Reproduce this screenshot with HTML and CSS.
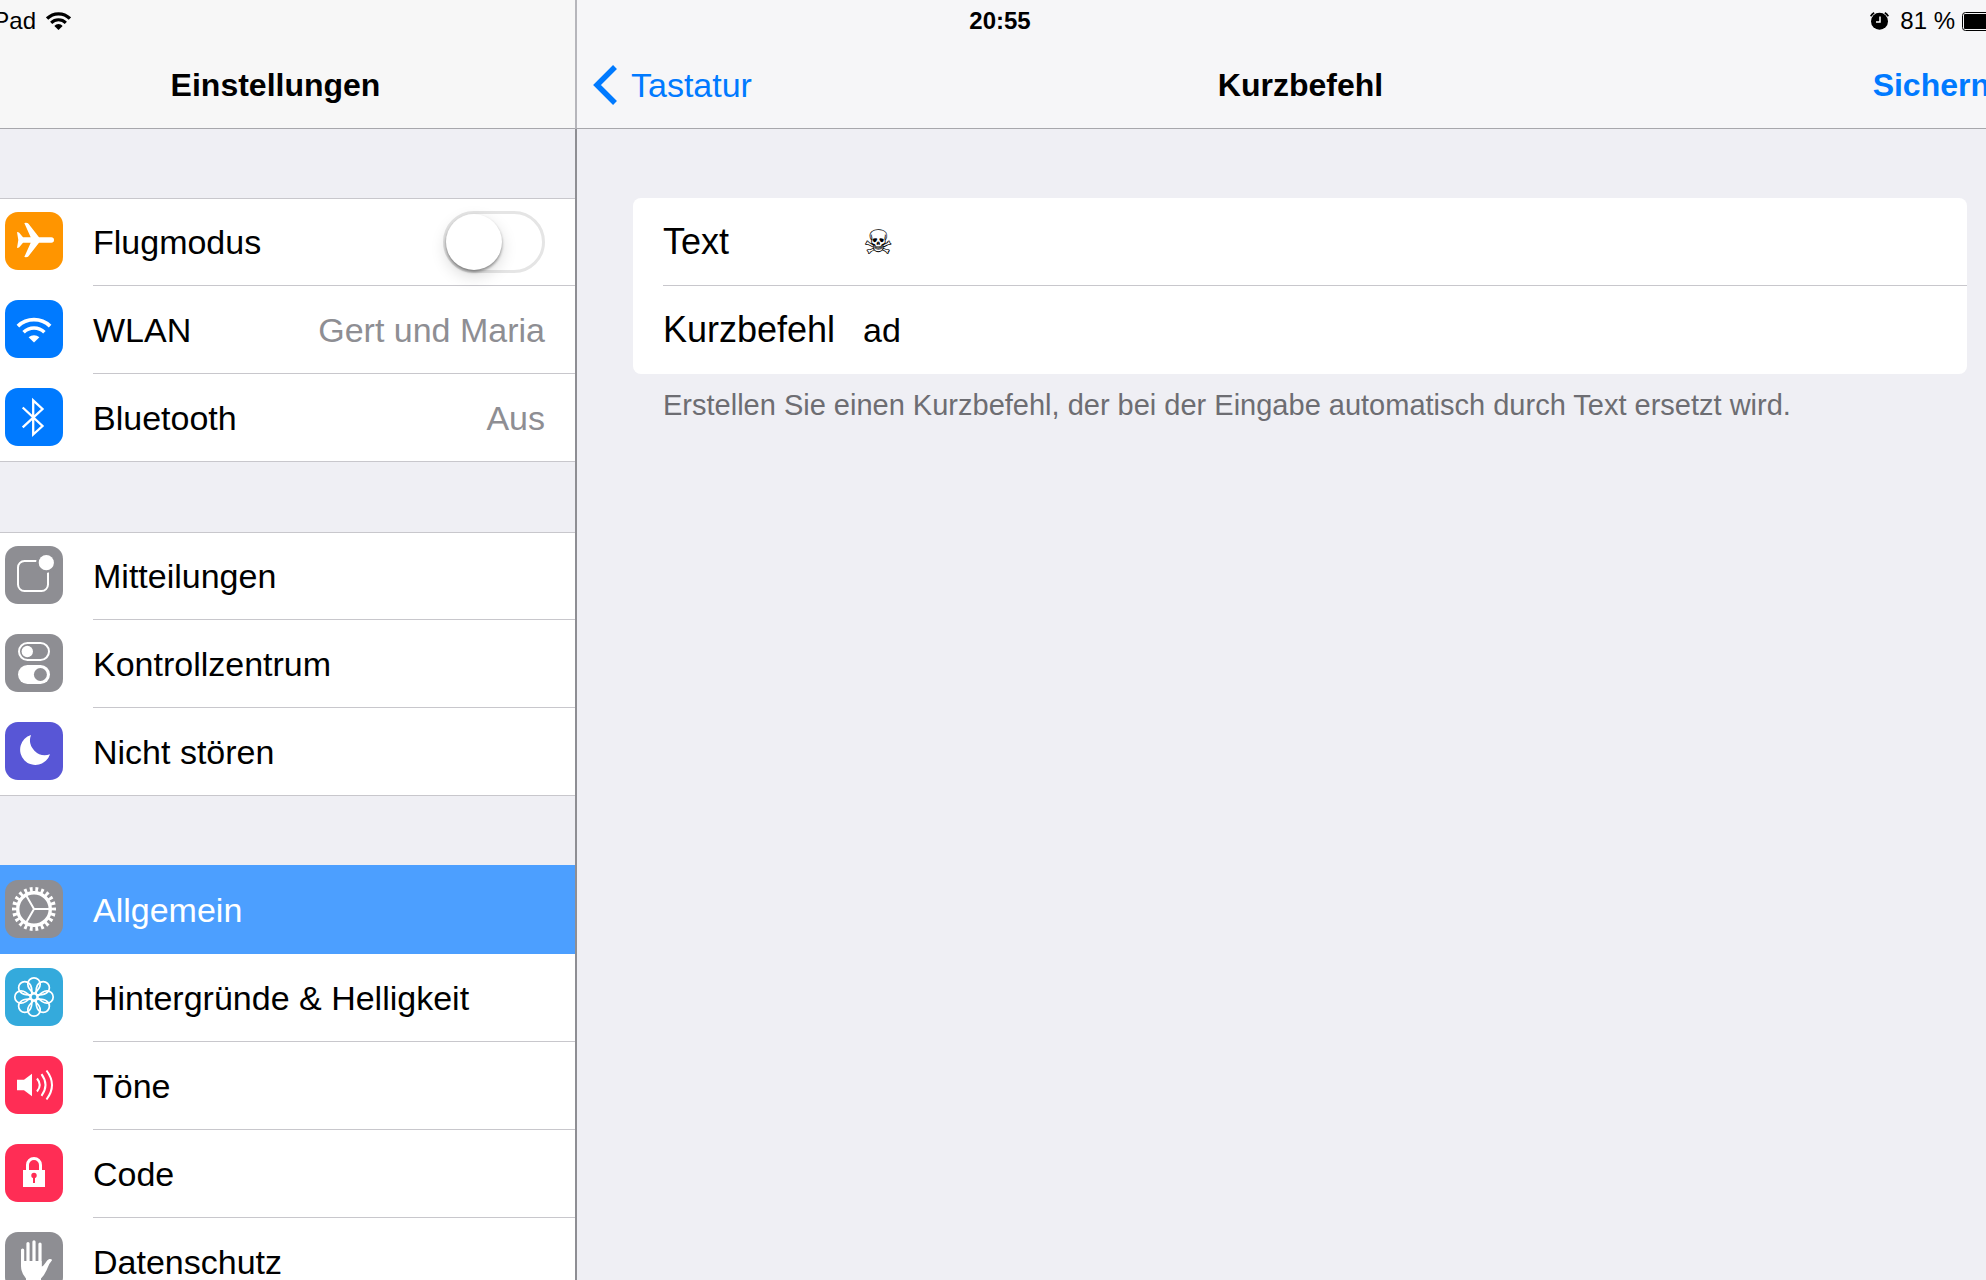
FILE: index.html
```html
<!DOCTYPE html>
<html lang="de">
<head>
    <meta charset="UTF-8">
    <meta name="viewport" content="width=device-width, initial-scale=1.0">
    <title>Einstellungen</title>
    <link rel="stylesheet" href="styles.css">
</head>
<body>
    <div class="screen">
        <div class="status-bar">
            <div class="status-left">
                <span>iPad</span>
                <svg class="status-wifi" viewBox="11 17 36 26" fill="none" stroke="#000">
                    <path stroke-width="4.8" d="M12.5 26.5a23.2 23.2 0 0 1 33 0"/>
                    <path stroke-width="4.4" d="M18.4 32.6a15 15 0 0 1 21.2 0"/>
                    <path fill="#000" stroke="none" d="M29 43l-6-5.800a8 8 0 0 1 12 0z"/>
                </svg>
            </div>
            <time class="status-time">20:55</time>
            <div class="status-right">
                <svg class="status-alarm" viewBox="0 0 19 18">
                    <circle cx="9.5" cy="9.3" r="8.5"/>
                    <path d="M0.6 4.2A12 12 0 0 1 4.2 0.8M18.4 4.2A12 12 0 0 0 14.8 0.8" fill="none" stroke="#000" stroke-width="1.6"/>
                    <path d="M10 4.5V10H6" fill="none" stroke="#fff" stroke-width="1.5"/>
                </svg>
                <span>81 %</span>
                <svg class="status-battery" viewBox="0 0 50 19">
                    <rect x="0.5" y="0.5" width="45" height="18" rx="3" fill="none" stroke="#000"/>
                    <rect x="2" y="2" width="36" height="15" rx="1"/>
                    <path d="M47 6q3 3.500 0 7z"/>
                </svg>
            </div>
        </div>

        <aside class="sidebar">
            <header class="nav-bar">
                <h1 class="nav-title">Einstellungen</h1>
            </header>

            <nav class="menu">
                <div class="group">
                    <div class="row">
                        <svg class="icon icon-orange" viewBox="0 0 58 58">
                            <path fill="#fff" d="M46.300 25.300a2.700 2.700 0 0 1 0 5.400H34L23.500 44.200q-1 1.300-4.200.8L25.700 30.700H18L14 35.500 12 36l1.300-8L12 20l2 .5 4 4.800h7.700L19.300 11q3.200-.5 4.200.8L34 25.300z"/>
                        </svg>
                        <div class="row-body">
                            <label for="flight">Flugmodus</label>
                            <input class="switch" type="checkbox" id="flight">
                        </div>
                    </div>
                    <a class="row" href="#wlan">
                        <svg class="icon icon-blue" viewBox="0 0 58 58" fill="none" stroke="#fff">
                            <path stroke-width="3.800" d="M12.900 26.200a23.200 23.200 0 0 1 32.200 0"/>
                            <path stroke-width="3.600" d="M18.600 32.200a15 15 0 0 1 20.800 0"/>
                            <path fill="#fff" stroke="none" d="M29 42.500l-5.400-5.200a8 8 0 0 1 10.800 0z"/>
                        </svg>
                        <div class="row-body">
                            <span>WLAN</span>
                            <span class="row-value">Gert und Maria</span>
                        </div>
                    </a>
                    <a class="row" href="#bluetooth">
                        <svg class="icon icon-blue" viewBox="0 0 58 58">
                            <path fill="none" stroke="#fff" stroke-width="2.300" d="M17.700 19.500L37.500 38 28.200 46.500V12.300L37.500 21 17.700 39.300"/>
                        </svg>
                        <div class="row-body">
                            <span>Bluetooth</span>
                            <span class="row-value">Aus</span>
                        </div>
                    </a>
                </div>

                <div class="group">
                    <a class="row" href="#mitteilungen">
                        <svg class="icon icon-gray" viewBox="0 0 58 58">
                            <rect x="13" y="15" width="30" height="30" rx="6.500" fill="none" stroke="#fff" stroke-width="2"/>
                            <circle cx="41.300" cy="16.700" r="10.300" fill="#8e8e93"/>
                            <circle cx="41.300" cy="16.700" r="7.600" fill="#fff"/>
                        </svg>
                        <div class="row-body"><span>Mitteilungen</span></div>
                    </a>
                    <a class="row" href="#kontrollzentrum">
                        <svg class="icon icon-gray" viewBox="0 0 58 58">
                            <rect x="14" y="9" width="30" height="17" rx="8.500" fill="none" stroke="#fff" stroke-width="2"/>
                            <circle cx="22.300" cy="17.500" r="5.700" fill="#fff"/>
                            <rect x="13" y="31" width="32" height="19" rx="9.500" fill="#fff"/>
                            <circle cx="35.400" cy="40.500" r="6.500" fill="#8e8e93"/>
                        </svg>
                        <div class="row-body"><span>Kontrollzentrum</span></div>
                    </a>
                    <a class="row" href="#nicht-stoeren">
                        <svg class="icon icon-purple" viewBox="0 0 58 58">
                            <path fill="#fff" d="M26 13A15.300 15.300 0 1 0 45 32.300 15 15 0 0 1 26 13z"/>
                        </svg>
                        <div class="row-body"><span>Nicht stören</span></div>
                    </a>
                </div>

                <div class="group">
                    <a class="row active" href="#allgemein">
                        <svg class="icon icon-gray" viewBox="0 0 58 58" fill="none" stroke="#fff">
                            <circle cx="29" cy="29" r="16.300" stroke-width="3.400"/>
                            <circle cx="29" cy="29" r="19.600" stroke-width="4.800" pathLength="44" stroke-dasharray="1 1" stroke-dashoffset="0.500"/>
                            <path stroke-width="2" d="M29 29H44M29 29L21.500 16M29 29L21.500 42"/>
                        </svg>
                        <div class="row-body"><span>Allgemein</span></div>
                    </a>
                    <a class="row" href="#hintergruende">
                        <svg class="icon icon-cyan" viewBox="0 0 58 58" fill="none" stroke="#fff" stroke-width="1.700">
                            <defs>
                                <path id="petal" d="M29 25.700C25 22.500 22.800 19 22.800 16a6.200 6.200 0 0 1 12.400 0C35.200 19 33 22.500 29 25.700z"/>
                            </defs>
                            <use href="#petal"/>
                            <use href="#petal" transform="rotate(45 29 29)"/>
                            <use href="#petal" transform="rotate(90 29 29)"/>
                            <use href="#petal" transform="rotate(135 29 29)"/>
                            <use href="#petal" transform="rotate(180 29 29)"/>
                            <use href="#petal" transform="rotate(225 29 29)"/>
                            <use href="#petal" transform="rotate(270 29 29)"/>
                            <use href="#petal" transform="rotate(315 29 29)"/>
                            <circle cx="29" cy="29" r="3.300"/>
                        </svg>
                        <div class="row-body"><span>Hintergründe &amp; Helligkeit</span></div>
                    </a>
                    <a class="row" href="#toene">
                        <svg class="icon icon-red" viewBox="0 0 58 58">
                            <path fill="#fff" d="M12 23.700H19L27 17.700V40.300L19 34.300H12z"/>
                            <path fill="none" stroke="#fff" stroke-width="2" d="M32 22.500Q37.500 29 32 35.500M36.500 18.200Q44.500 29 36.500 39.800M41.500 14.500Q52.500 29 41.500 43.500"/>
                        </svg>
                        <div class="row-body"><span>Töne</span></div>
                    </a>
                    <a class="row" href="#code">
                        <svg class="icon icon-red" viewBox="0 0 58 58">
                            <path fill="none" stroke="#fff" stroke-width="3" d="M22.500 27V21a6.500 6.500 0 0 1 13 0V27"/>
                            <rect x="18" y="26" width="22" height="17" fill="#fff"/>
                            <circle cx="29" cy="31.500" r="2.700" fill="#ff2d55"/>
                            <path stroke="#ff2d55" stroke-width="2" d="M29 31V39"/>
                        </svg>
                        <div class="row-body"><span>Code</span></div>
                    </a>
                    <a class="row" href="#datenschutz">
                        <svg class="icon icon-gray" viewBox="0 0 58 58">
                            <path fill="none" stroke="#fff" stroke-width="3.200" stroke-linecap="round" d="M17.600 18V33M23 11.500V32M29 9.800V32M35 12V34"/>
                            <path fill="#fff" d="M16 29H36.600V34.500Q38.500 34 40 31.500 42.500 27.300 44.500 27 47 26.800 47 28.300 44.500 31 42.500 36 39.500 43.500 36 46.500V50H21V46.500Q16 41 16 34z"/>
                        </svg>
                        <div class="row-body"><span>Datenschutz</span></div>
                    </a>
                </div>
            </nav>
        </aside>

        <main class="detail">
            <header class="nav-bar nav-bar-detail">
                <a class="back" href="#tastatur">
                    <svg class="chevron" viewBox="0 0 24 40">
                        <path fill="none" stroke="#007aff" stroke-width="5.500" d="M22 2L4 20 22 38"/>
                    </svg>
                    Tastatur
                </a>
                <h2 class="nav-title">Kurzbefehl</h2>
                <button class="save" type="submit" form="shortcut">Sichern</button>
            </header>

            <form class="form" id="shortcut">
                <div class="fields">
                    <div class="field">
                        <label for="text">Text</label>
                        <input type="text" id="text" value="☠">
                    </div>
                    <div class="field">
                        <label for="short">Kurzbefehl</label>
                        <input type="text" id="short" value="ad">
                    </div>
                </div>
                <p class="hint">Erstellen Sie einen Kurzbefehl, der bei der Eingabe automatisch durch Text ersetzt wird.</p>
            </form>
        </main>
    </div>
</body>
</html>
```
FILE: styles.css
```css
* {
    margin: 0;
    padding: 0;
    box-sizing: border-box;
}

body {
    background: #efeff4;
    color: #000;
    font-family: "Liberation Sans", Arial, "DejaVu Sans", sans-serif;
    font-size: 34px;
    overflow: hidden;
}

a {
    color: inherit;
    text-decoration: none;
}

/* the screen runs past both window edges */
.screen {
    display: grid;
    grid-template-columns: 599px 1fr;
    grid-template-rows: 42px 1fr;
    height: 100vh;
    margin: 0 -38px 0 -24px;
}

/* Status bar */
.status-bar {
    grid-area: 1 / 1 / 2 / 3;
    z-index: 1;
    display: grid;
    grid-template-columns: 1fr auto 1fr;
    align-items: center;
    padding: 0 12px;
    font-size: 24px;
}

.status-left,
.status-right {
    display: flex;
    align-items: center;
    gap: 10px;
}

.status-right {
    justify-content: flex-end;
    gap: 7px;
}

.status-time {
    font-weight: bold;
}

.status-wifi {
    width: 25px;
    height: 18px;
}

.status-alarm {
    width: 19px;
    height: 18px;
    margin-right: 4px;
}

.status-battery {
    width: 50px;
    height: 19px;
}

/* Panes */
.sidebar {
    grid-area: 1 / 1 / 3 / 2;
    overflow: hidden;
}

.detail {
    grid-area: 1 / 2 / 3 / 3;
    border-left: 2px solid #8e8e93;
}

.nav-bar {
    display: grid;
    align-items: center;
    height: 129px;
    padding-top: 42px;
    background: #f7f7f7;
    border-bottom: 1px solid #a7a7ac;
}

.nav-bar-detail {
    grid-template-columns: 1fr auto 1fr;
    margin-left: -2px;
    padding-right: 16px;
    padding-left: 16px;
    background: #f6f6f8;
    border-left: 2px solid #b6b6bb;
}

.nav-title {
    font-size: 32px;
    text-align: center;
}

.back {
    display: flex;
    align-items: center;
    gap: 14px;
    color: #007aff;
}

.chevron {
    width: 24px;
    height: 40px;
}

.save {
    justify-self: end;
    margin-right: 18px;
    background: none;
    border: none;
    color: #007aff;
    font: inherit;
    font-size: 32px;
    font-weight: bold;
    cursor: pointer;
}

/* Sidebar list */
.menu {
    display: flex;
    flex-direction: column;
    gap: 70px;
    padding-top: 69px;
}

.group {
    background: #fff;
    box-shadow: inset 0 1px #c8c7cc;
}

.group .row:last-child {
    box-shadow: inset 0 -1px #c8c7cc;
}

.row {
    display: flex;
    align-items: flex-start;
    gap: 30px;
    height: 88px;
    padding-left: 29px;
}

.icon {
    flex: none;
    width: 58px;
    height: 58px;
    margin-top: 14px;
    border-radius: 13px;
}

.icon-orange { background: #ff9500; }
.icon-blue { background: #007aff; }
.icon-gray { background: #8e8e93; }
.icon-purple { background: #5856d6; }
.icon-cyan { background: #34aadc; }
.icon-red { background: #ff2d55; }

.row-body {
    flex: 1;
    display: flex;
    align-items: center;
    justify-content: space-between;
    height: 88px;
    padding-right: 30px;
    border-bottom: 1px solid #c8c7cc;
}

.row-body span,
.row-body label {
    padding-top: 2px;
}

.row-value {
    color: #8e8e93;
}

.row.active {
    background: #4c9fff;
    box-shadow: 0 -1px #4c9fff;
    color: #fff;
}

.row.active .row-body {
    border-color: transparent;
}

.switch {
    appearance: none;
    width: 102px;
    height: 62px;
    border: 3px solid #e5e5e5;
    border-radius: 31px;
    cursor: pointer;
}

.switch::before {
    content: "";
    display: block;
    width: 56px;
    height: 56px;
    background: #fff;
    border-radius: 50%;
    box-shadow: 0 2px 3px rgba(0, 0, 0, 0.4), 0 6px 16px rgba(0, 0, 0, 0.15);
}

.switch:checked {
    background: #4cd964;
    border-color: #4cd964;
}

.switch:checked::before {
    margin-left: 40px;
}

/* Shortcut form */
.form {
    padding: 69px 57px 0 56px;
}

.fields {
    background: #fff;
    border-radius: 8px;
    padding-left: 30px;
}

.field {
    display: flex;
    align-items: center;
    height: 88px;
}

.field + .field {
    box-shadow: 0 -1px #c8c7cc;
}

.field label {
    width: 200px;
    font-size: 36px;
}

.field input {
    flex: 1;
    border: none;
    outline: none;
    background: none;
    color: #000;
    font: inherit;
}

.hint {
    padding: 14px 30px;
    color: #6d6d72;
    font-size: 29px;
    line-height: 34px;
}
```
